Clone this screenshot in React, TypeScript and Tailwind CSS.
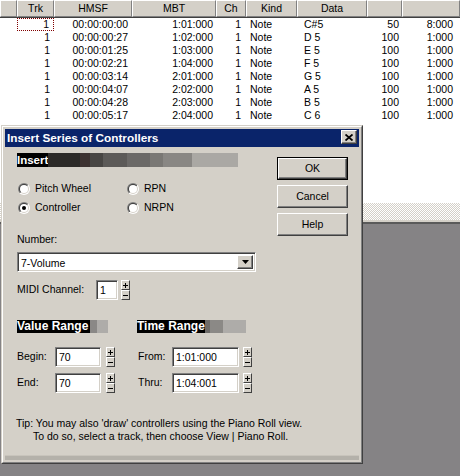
import React from "react";

const font = "font-['Liberation_Sans',Arial,sans-serif]";

const sunken =
  "border border-t-[#808080] border-l-[#808080] border-b-white border-r-white bg-white shadow-[inset_1px_1px_0_#404040,inset_-1px_-1px_0_#d4d0c8]";
const raised =
  "border border-t-white border-l-white border-r-[#404040] border-b-[#404040] bg-[#d4d0c8] shadow-[inset_-1px_-1px_0_#808080]";

const events = [
  ["00:00:00:00", "1:01:000", "C#5", "50", "8:000"],
  ["00:00:00:27", "1:02:000", "D 5", "100", "1:000"],
  ["00:00:01:25", "1:03:000", "E 5", "100", "1:000"],
  ["00:00:02:21", "1:04:000", "F 5", "100", "1:000"],
  ["00:00:03:14", "2:01:000", "G 5", "100", "1:000"],
  ["00:00:04:07", "2:02:000", "A 5", "100", "1:000"],
  ["00:00:04:28", "2:03:000", "B 5", "100", "1:000"],
  ["00:00:05:17", "2:04:000", "C 6", "100", "1:000"],
];

const headers = [
  { label: "", w: "w-[17px]" },
  { label: "Trk", w: "w-[37px]" },
  { label: "HMSF", w: "w-[78px]" },
  { label: "MBT", w: "w-[84px]" },
  { label: "Ch", w: "w-[30px]" },
  { label: "Kind", w: "w-[51px]" },
  { label: "Data", w: "w-[70px]" },
  { label: "", w: "w-[35px]" },
  { label: "", w: "w-[58px]" },
];

// blocky fade used behind the group captions
const insertSteps = [
  "w-[32px] bg-[#2c2a28]",
  "w-[10px] bg-[#3e3331]",
  "w-[13px] bg-[#484644]",
  "w-[24px] bg-[#5c5a58]",
  "w-[23px] bg-[#6b6967]",
  "w-[13px] bg-[#7a7875]",
  "w-[29px] bg-[#898784]",
  "w-[46px] bg-[#aaa8a4]",
];

function Radio({ checked }: { checked?: boolean }) {
  return (
    <svg width="12" height="12" viewBox="0 0 12 12" className="shrink-0">
      <defs>
        <linearGradient id="rOuter" x1="0" y1="0" x2="1" y2="1">
          <stop offset="0.5" stopColor="#808080" />
          <stop offset="0.5" stopColor="#ffffff" />
        </linearGradient>
        <linearGradient id="rInner" x1="0" y1="0" x2="1" y2="1">
          <stop offset="0.5" stopColor="#404040" />
          <stop offset="0.5" stopColor="#d4d0c8" />
        </linearGradient>
      </defs>
      <circle cx="6" cy="6" r="6" fill="url(#rOuter)" />
      <circle cx="6" cy="6" r="5" fill="url(#rInner)" />
      <circle cx="6" cy="6" r="4" fill="#fff" />
      {checked && <circle cx="6" cy="6" r="2" fill="#000" />}
    </svg>
  );
}

function SpinBtn({ plus }: { plus?: boolean }) {
  return (
    <div className="flex h-[10px] w-[9px] items-center justify-center border border-t-white border-l-white border-r-[#404040] border-b-[#404040] bg-[#d4d0c8]">
      <svg width="5" height="5" viewBox="0 0 5 5">
        <rect x="0" y="2" width="5" height="1" fill="#000" />
        {plus && <rect x="2" y="0" width="1" height="5" fill="#000" />}
      </svg>
    </div>
  );
}

function Spin({ className = "" }: { className?: string }) {
  return (
    <div className={`flex h-[20px] w-[9px] flex-col ${className}`}>
      <SpinBtn plus />
      <SpinBtn />
    </div>
  );
}

function Field({ value, className }: { value: string; className: string }) {
  return (
    <div className={`h-[20px] pl-[3px] leading-[18px] ${sunken} ${className}`}>
      {value}
    </div>
  );
}

function Btn({ label, isDefault }: { label: string; isDefault?: boolean }) {
  if (isDefault) {
    return (
      <div className="h-[23px] w-[71px] border border-black">
        <div className={`flex h-full items-center justify-center ${raised}`}>{label}</div>
      </div>
    );
  }
  return (
    <div className={`flex h-[23px] w-[71px] items-center justify-center ${raised}`}>{label}</div>
  );
}

function EventList() {
  return (
    <div className="flex h-[203px] flex-col bg-white">
      <div className="flex h-[18px] border-b border-b-[#404040]">
        {headers.map((h, i) => (
          <div
            key={i}
            className={`${h.w} h-[17px] shrink-0 border border-t-white border-l-white border-r-[#808080] border-b-[#808080] bg-[#d4d0c8] text-center leading-[15px]`}
          >
            {h.label}
          </div>
        ))}
      </div>
      {events.map((r, i) => (
        <div key={i} className="flex h-[13px] leading-[13px]">
          <div className="w-[17px] shrink-0" />
          <div
            className={`w-[37px] shrink-0 pr-[4px] text-right ${
              i === 0 ? "border border-dotted border-[#800000] leading-[11px]" : ""
            }`}
          >
            1
          </div>
          <div className="w-[78px] shrink-0 pr-[4px] text-right">{r[0]}</div>
          <div className="w-[84px] shrink-0 pr-[3px] text-right">{r[1]}</div>
          <div className="w-[30px] shrink-0 pr-[5px] text-right">1</div>
          <div className="w-[51px] shrink-0 pl-[4px]">Note</div>
          <div className="w-[70px] shrink-0 whitespace-pre pl-[7px]">{r[2]}</div>
          <div className="w-[35px] shrink-0 pr-[3px] text-right">{r[3]}</div>
          <div className="w-[58px] shrink-0 pr-[7px] text-right">{r[4]}</div>
        </div>
      ))}
    </div>
  );
}

function Dialog() {
  return (
    <div className="absolute left-[1px] top-[125px] h-[339px] w-[362px] border border-t-[#d4d0c8] border-l-[#d4d0c8] border-r-[#404040] border-b-[#404040] bg-[#d4d0c8]">
      <div className="flex h-full flex-col border border-t-white border-l-white border-r-[#808080] border-b-[#808080] p-[2px]">
        {/* title bar */}
        <div className="flex h-[18px] shrink-0 justify-between bg-[#0a246a] pl-[2px] pr-[2px]">
          <span className="text-[11.8px] font-bold leading-[18px] text-white">
            Insert Series of Controllers
          </span>
          <div className={`mt-[1px] flex h-[14px] w-[16px] items-center justify-center ${raised}`}>
            <svg width="8" height="7" viewBox="0 0 8 7">
              <path d="M0.5 0.5 L7.5 6.5 M7.5 0.5 L0.5 6.5" stroke="#000" strokeWidth="1.8" />
            </svg>
          </div>
        </div>

        <div className="flex">
          {/* left column */}
          <div className="ml-[12px] flex w-[239px] flex-col pt-[6px]">
            <div className="flex h-[14px] w-[221px]">
              <div className="w-[31px] bg-black text-[11.5px] font-bold leading-[14px] text-white">Insert</div>
              {insertSteps.map((c, i) => (
                <div key={i} className={c} />
              ))}
            </div>

            <div className="mt-[12px] grid grid-cols-[109px_1fr]">
              {[
                ["Pitch Wheel", false],
                ["RPN", false],
                ["Controller", true],
                ["NRPN", false],
              ].map(([label, on]) => (
                <div key={label as string} className="flex h-[19px] items-center pl-[1px]">
                  <Radio checked={on as boolean} />
                  <span className="ml-[5px]">{label as string}</span>
                </div>
              ))}
            </div>

            <div className="mt-[16px] h-[12px] leading-[12px]">Number:</div>
            <div className={`mt-[7px] flex h-[20px] items-stretch p-[2px] ${sunken}`}>
              <div className="flex-1 pl-[1px] leading-[16px]">7-Volume</div>
              <div className={`flex w-[16px] items-center justify-center ${raised}`}>
                <svg width="7" height="4" viewBox="0 0 7 4">
                  <path d="M0 0 H7 L3.5 4 Z" fill="#000" />
                </svg>
              </div>
            </div>

            <div className="mt-[8px] flex h-[20px] items-center">
              <span className="w-[79px]">MIDI Channel:</span>
              <Field value="1" className="w-[22px]" />
              <Spin className="ml-[3px]" />
            </div>

            <div className="mt-[20px] flex">
              <div className="flex w-[120px] flex-col">
                <div className="flex h-[13px] w-[91px]">
                  <div className="w-[73px] bg-black text-[12px] font-bold leading-[13px] text-white">Value Range</div>
                  <div className="w-[7px] bg-[#8a8886]" />
                  <div className="w-[11px] bg-[#aeaca9]" />
                </div>
                <div className="mt-[14px] flex h-[20px] items-center">
                  <span className="w-[38px]">Begin:</span>
                  <Field value="70" className="w-[46px]" />
                  <Spin className="ml-[5px]" />
                </div>
                <div className="mt-[6px] flex h-[20px] items-center">
                  <span className="w-[38px]">End:</span>
                  <Field value="70" className="w-[46px]" />
                  <Spin className="ml-[5px]" />
                </div>
              </div>
              <div className="flex flex-col">
                <div className="flex h-[13px] w-[109px]">
                  <div className="w-[68px] bg-black text-[12px] font-bold leading-[13px] text-white">Time Range</div>
                  <div className="w-[5px] bg-[#6d6b68]" />
                  <div className="w-[13px] bg-[#8b8986]" />
                  <div className="w-[23px] bg-[#aeaca9]" />
                </div>
                <div className="mt-[14px] flex h-[20px] items-center">
                  <span className="w-[35px] pl-[1px]">From:</span>
                  <Field value="1:01:000" className="w-[67px]" />
                  <Spin className="ml-[4px]" />
                </div>
                <div className="mt-[6px] flex h-[20px] items-center">
                  <span className="w-[35px] pl-[1px]">Thru:</span>
                  <Field value="1:04:001" className="w-[67px]" />
                  <Spin className="ml-[4px]" />
                </div>
              </div>
            </div>
          </div>

          {/* buttons */}
          <div className="ml-[21px] flex flex-col gap-[5px] pt-[10px]">
            <Btn label="OK" isDefault />
            <Btn label="Cancel" />
            <Btn label="Help" />
          </div>
        </div>

        <div className="mt-[24px] pl-[11px] leading-[13px]">
          <div>Tip: You may also 'draw' controllers using the Piano Roll view.</div>
          <div className="pl-[17px]">To do so, select a track, then choose View | Piano Roll.</div>
        </div>

        <div className="mt-auto h-[5px] border-t border-t-[#c8c4bc] bg-[#b4b1aa]" />
      </div>
    </div>
  );
}

export default function App() {
  return (
    <div className={`relative h-[476px] w-[460px] overflow-hidden bg-[#858385] text-[10.5px] text-black ${font}`}>
      <EventList />
      <div className="h-[17px] bg-[repeating-conic-gradient(#ffffff_0%_25%,#d4d0c8_0%_50%)] bg-[length:2px_2px]" />
      <div className="h-[2px] bg-[#d4d0c8]" />
      <div className="h-[2px] bg-[#5a5a5a]" />
      <Dialog />
    </div>
  );
}
